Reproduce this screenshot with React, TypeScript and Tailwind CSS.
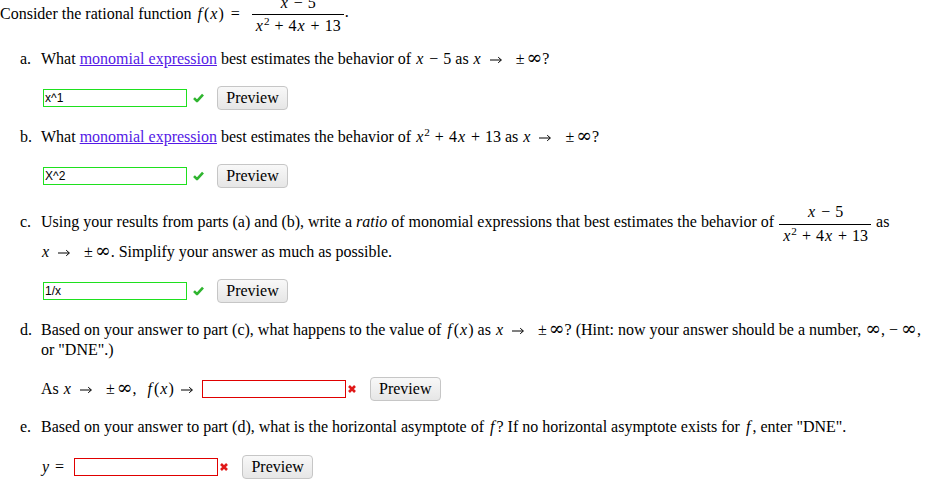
import React from "react";

function V({ children, wide = false }: { children: React.ReactNode; wide?: boolean }) {
  return <i className={`italic ${wide ? "px-[2px]" : "px-[1px]"}`}>{children}</i>;
}

function Op({ children }: { children: React.ReactNode }) {
  return <span className="mx-[5px]">{children}</span>;
}

function Arrow({ className = "" }: { className?: string }) {
  return (
    <svg width="12" height="8" viewBox="0 0 12 8" className={`inline-block align-middle ${className}`}>
      <path d="M0 4 H11.2 M8.2 1.2 L11.4 4 L8.2 6.8" stroke="#000" strokeWidth="1" fill="none" />
    </svg>
  );
}

function Inf() {
  return <span className="font-['DejaVu_Serif',serif] text-[19px] leading-[10px]">∞</span>;
}

function Fx() {
  return (
    <span>
      <V wide>f</V>(<V>x</V>)
    </span>
  );
}

function ToInf() {
  return (
    <span>
      <V>x</V>
      <Arrow className="ml-[8px] mr-[14px]" />
      <span className="mr-[2px]">±</span>
      <Inf />
    </span>
  );
}

function Sq() {
  return (
    <span>
      <V>x</V>
      <sup className="text-[0.7em]">2</sup>
      <Op>+</Op>4<V>x</V>
      <Op>+</Op>13
    </span>
  );
}

function Frac({ shift }: { shift: string }) {
  return (
    <span className={`inline-flex flex-col items-center align-middle leading-[1.15] ${shift}`}>
      <span className="px-[3px]">
        <V>x</V>
        <Op>−</Op>5
      </span>
      <span className="h-px w-full bg-black my-[2px]" />
      <span className="px-[3px]">
        <Sq />
      </span>
    </span>
  );
}

function Check() {
  return (
    <svg width="11" height="10" viewBox="0 0 11 10" className="ml-[6px]">
      <path d="M1 5.2 L4 8.2 L10 1.6" stroke="#2fb52f" strokeWidth="2.6" fill="none" strokeLinejoin="round" />
    </svg>
  );
}

function Cross() {
  return (
    <svg width="8" height="8" viewBox="0 0 8 8" className="ml-[2px]">
      <path d="M1 1 L7 7 M7 1 L1 7" stroke="#e01818" strokeWidth="2.6" fill="none" />
    </svg>
  );
}

function PreviewBtn({ ml }: { ml: string }) {
  return (
    <button
      className={`${ml} w-[71px] h-[24px] rounded-[4px] border border-[#c6c6c6] bg-gradient-to-b from-[#f8f8f8] to-[#e6e6e6] text-[16px] leading-[20px] text-black`}
    >
      Preview
    </button>
  );
}

function AnswerBox({ value, ok }: { value: string; ok: boolean }) {
  return (
    <div
      className={`w-[144px] h-[18px] border ${
        ok ? "border-[#1ee01e]" : "border-[#e00000]"
      } bg-white px-[1px] font-['Liberation_Sans',Arial,sans-serif] text-[12px] leading-[16px]`}
    >
      {value}
    </div>
  );
}

function Item({
  label,
  children,
  className = "",
  labelClass = "",
}: {
  label: string;
  children: React.ReactNode;
  className?: string;
  labelClass?: string;
}) {
  return (
    <div className={`flex pl-[20px] ${className}`}>
      <span className={`w-[21px] shrink-0 ${labelClass}`}>{label}</span>
      <div className="flex-1">{children}</div>
    </div>
  );
}

export default function App() {
  return (
    <div className="w-[936px] h-[496px] overflow-hidden bg-white text-black text-[16px] leading-[20px] font-['Liberation_Serif','Times_New_Roman',serif]">
      {/* intro */}
      <div className="-mt-[7px] h-[42px] flex items-center whitespace-nowrap">
        <span>
          Consider the rational function <Fx />
          <span className="ml-[7px] mr-[12px]">=</span>
        </span>
        <Frac shift="mt-[1px]" />
        <span className="self-end mb-[13px] ml-[1px]">.</span>
      </div>

      {/* a */}
      <Item label="a." className="mt-[14px]">
        <div className="whitespace-nowrap">
          What <span className="text-[#5419e6] underline">monomial expression</span> best estimates the behavior of{" "}
          <V>x</V>
          <Op>−</Op>5 as <ToInf />?
        </div>
        <div className="mt-[17px] ml-[2px] flex items-center h-[24px]">
          <AnswerBox value="x^1" ok />
          <Check />
          <PreviewBtn ml="ml-[13px]" />
        </div>
      </Item>

      {/* b */}
      <Item label="b." className="mt-[17px]">
        <div className="whitespace-nowrap">
          What <span className="text-[#5419e6] underline">monomial expression</span> best estimates the behavior of{" "}
          <Sq /> as <ToInf />?
        </div>
        <div className="mt-[17px] ml-[2px] flex items-center h-[24px]">
          <AnswerBox value="X^2" ok />
          <Check />
          <PreviewBtn ml="ml-[13px]" />
        </div>
      </Item>

      {/* c */}
      <Item label="c." className="mt-[14px]" labelClass="mt-[10px]">
        <div className="h-[40px] flex items-center whitespace-nowrap">
          <span>
            Using your results from parts (a) and (b), write a <i>ratio</i> of monomial expressions that best estimates the
            behavior of
          </span>
          <span className="ml-[5px]">
            <Frac shift="mt-[4px]" />
          </span>
          <span className="ml-[5px]">as</span>
        </div>
        <div className="whitespace-nowrap">
          <ToInf />. Simplify your answer as much as possible.
        </div>
        <div className="mt-[17px] ml-[2px] flex items-center h-[24px]">
          <AnswerBox value="1/x" ok />
          <Check />
          <PreviewBtn ml="ml-[13px]" />
        </div>
      </Item>

      {/* d */}
      <Item label="d." className="mt-[17px]">
        <div className="whitespace-nowrap">
          Based on your answer to part (c), what happens to the value of <Fx /> as <ToInf />? (Hint: now your answer should
          be a number, <Inf />, <span className="mr-[3px]">−</span>
          <Inf />,
        </div>
        <div>or "DNE".)</div>
        <div className="mt-[17px] flex items-center h-[24px] whitespace-nowrap">
          <span>
            As <ToInf />,<span className="ml-[9px]"><Fx /></span>
            <Arrow className="ml-[7px] mr-[9px]" />
          </span>
          <AnswerBox value="" ok={false} />
          <Cross />
          <PreviewBtn ml="ml-[14px]" />
        </div>
      </Item>

      {/* e */}
      <Item label="e." className="mt-[16px]">
        <div className="whitespace-nowrap">
          Based on your answer to part (d), what is the horizontal asymptote of <V wide>f</V>? If no horizontal asymptote
          exists for <V wide>f</V>, enter "DNE".
        </div>
        <div className="mt-[18px] flex items-center h-[24px] whitespace-nowrap">
          <span>
            <V>y</V>
            <span className="ml-[5px] mr-[10px]">=</span>
          </span>
          <AnswerBox value="" ok={false} />
          <Cross />
          <PreviewBtn ml="ml-[14px]" />
        </div>
      </Item>
    </div>
  );
}
